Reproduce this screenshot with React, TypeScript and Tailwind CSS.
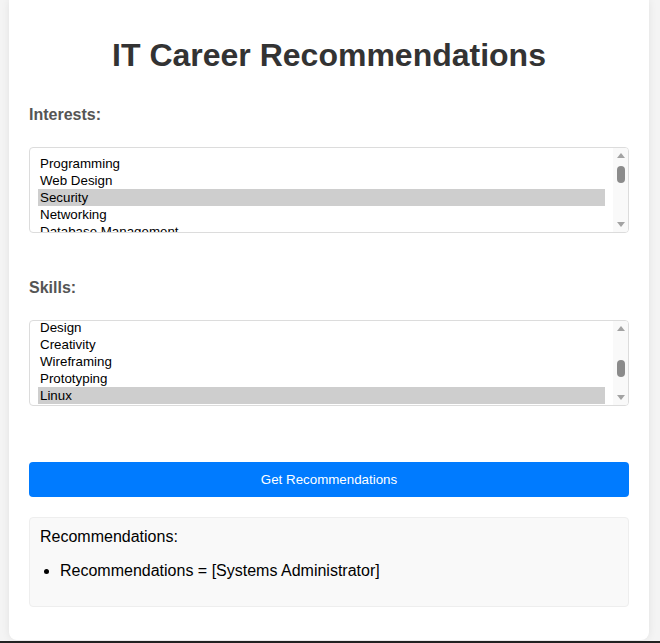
import React from "react";

const interests = ["Programming", "Web Design", "Security", "Networking", "Database Management"];
const skills = ["Design", "Creativity", "Wireframing", "Prototyping", "Linux"];

function Arrow({ down }: { down?: boolean }) {
  return (
    <div className="h-[15px] flex items-center justify-center">
      <svg width="8" height="5" viewBox="0 0 8 5">
        <polygon points={down ? "0,0 8,0 4,5" : "0,5 8,5 4,0"} fill="#a3a3a3" />
      </svg>
    </div>
  );
}

function ListBox({
  items,
  selected,
  offset,
  thumbTop,
}: {
  items: string[];
  selected: string;
  offset: string;
  thumbTop: string;
}) {
  return (
    <div className="flex h-[86px] border border-[#dcdcdc] rounded-[4px] bg-white overflow-hidden">
      <div className={`flex-1 px-2 overflow-hidden ${offset}`}>
        {items.map((item) => (
          <div
            key={item}
            className={`h-[17px] leading-[17px] px-[2px] text-[13.33px] text-black whitespace-nowrap ${
              item === selected ? "bg-[#cecece]" : ""
            }`}
          >
            {item}
          </div>
        ))}
      </div>
      <div className="w-[15px] flex flex-col bg-[#f9f9f9]">
        <Arrow />
        <div className="flex-1 flex flex-col items-center">
          <div className={`w-[8px] h-[17px] rounded-full bg-[#8b8b8b] ${thumbTop}`} />
        </div>
        <Arrow down />
      </div>
    </div>
  );
}

export default function App() {
  return (
    <div className="h-[643px] bg-[#f4f4f4] flex flex-col overflow-hidden font-['Liberation_Sans',Arial,sans-serif]">
      <div className="ml-[9px] w-[640px] h-[640px] bg-white rounded-b-lg shadow-[0_0_8px_rgba(0,0,0,0.08)] px-5 pt-[37px]">
        <h1 className="text-[32px] leading-[37px] font-bold text-center text-[#333]">
          IT Career Recommendations
        </h1>

        <label className="block mt-[32px] text-[16px] leading-[18px] font-bold text-[#555]">Interests:</label>
        <div className="mt-[23px]">
          <ListBox items={interests} selected="Security" offset="pt-[7px]" thumbTop="mt-[3px]" />
        </div>

        <label className="block mt-[46px] text-[16px] leading-[18px] font-bold text-[#555]">Skills:</label>
        <div className="mt-[23px]">
          <ListBox items={skills} selected="Linux" offset="-mt-[2px]" thumbTop="mt-[24px]" />
        </div>

        <button className="mt-[56px] w-full h-[35px] bg-[#007bff] text-white text-[13.33px] rounded-[4px]">
          Get Recommendations
        </button>

        <div className="mt-[20px] border border-[#eee] bg-[#f9f9f9] rounded-[4px] p-[10px] text-black">
          <p className="text-[16px] leading-[18px]">Recommendations:</p>
          <ul className="list-disc pl-5 my-4 text-[16px] leading-[18px]">
            <li>Recommendations = [Systems Administrator]</li>
          </ul>
        </div>
      </div>
      <div className="h-px" />
      <div className="h-[2px] bg-[#222]" />
    </div>
  );
}
